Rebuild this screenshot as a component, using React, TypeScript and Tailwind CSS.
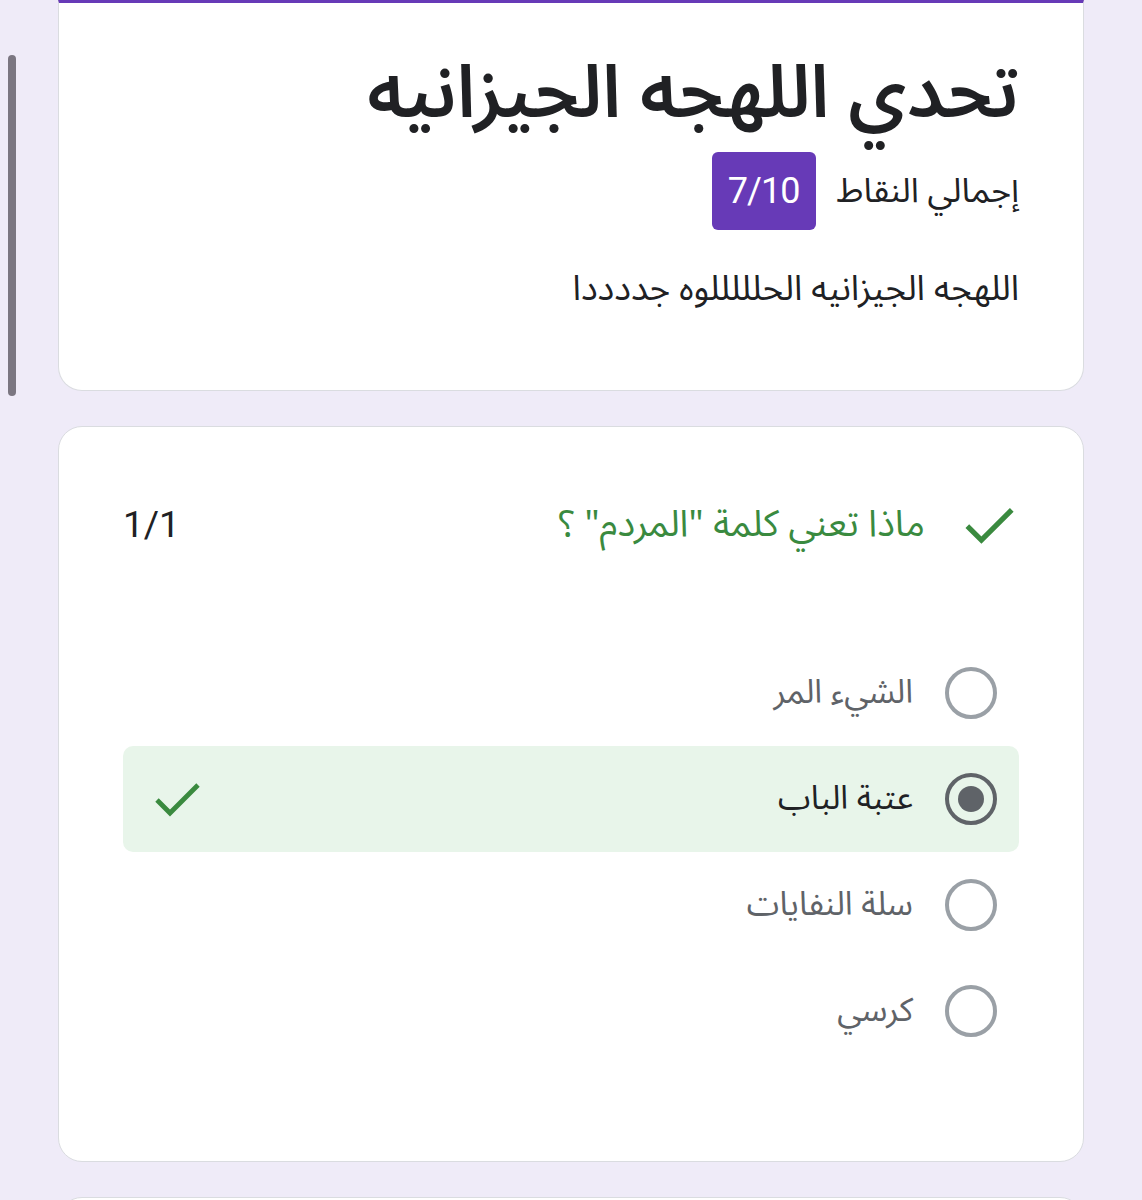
import React from "react";

const font = { fontFamily: '"Noto Sans Arabic", "DejaVu Sans", "Noto Sans", sans-serif' };
const latin = { fontFamily: '"Roboto", "Liberation Sans", sans-serif' };

function Check({ className }: { className?: string }) {
  return (
    <svg viewBox="0 0 24 24" className={className} fill="none">
      <path d="M2 12.5l6.5 6.5L22.5 5" stroke="currentColor" strokeWidth="2.4" />
    </svg>
  );
}

function Radio({ checked }: { checked?: boolean }) {
  return (
    <span
      className={
        "flex h-[52px] w-[52px] shrink-0 items-center justify-center rounded-full border-[4px] " +
        (checked ? "border-[#5f6368]" : "border-[#9aa0a6]")
      }
    >
      {checked ? <span className="h-[26px] w-[26px] rounded-full bg-[#5f6368]" /> : null}
    </span>
  );
}

const options = [
  { label: "الشيء المر", checked: false },
  { label: "عتبة الباب", checked: true },
  { label: "سلة النفايات", checked: false },
  { label: "كرسي", checked: false },
];

export default function App() {
  return (
    <div dir="rtl" style={font} className="relative h-[1200px] overflow-hidden bg-[#efebf8]">
      {/* scrollbar */}
      <div className="absolute left-[8px] top-[55px] h-[341px] w-[8px] rounded-full bg-[#7b7681]" />

      <div className="mx-auto flex w-[1026px] flex-col gap-[35px]">
        <div className="h-[391px] rounded-b-[24px] border-x border-b border-[#dadce0] border-t-[3px] border-t-[#673ab7] bg-white px-[64px] pt-[46px]">
          <h1 className="text-[73px] font-semibold leading-[90px] text-[#202124]">تحدي اللهجه الجيزانيه</h1>
          <div className="mt-[13px] flex items-center gap-[21px]">
            <span className="text-[34px] leading-[44px] text-[#202124]">إجمالي النقاط</span>
            <span
              dir="ltr"
              style={latin}
              className="flex h-[78px] w-[104px] items-center justify-center rounded-[6px] bg-[#673ab7] text-[36px] tracking-[-1px] text-white"
            >
              7/10
            </span>
          </div>
          <p className="mt-[34px] text-[35px] leading-[50px] text-[#202124]">اللهجه الجيزانيه  الحلللللوه جددددا</p>
        </div>

        <div className="h-[736px] rounded-[24px] border border-[#dadce0] bg-white pl-[64px] pr-[68px] pt-[70px]">
          <div className="flex items-center justify-between">
            <div className="flex items-center gap-[38px]">
              <Check className="h-[52px] w-[52px] text-[#3a8a3f]" />
              <span className="text-[37px] text-[#3a8a3f]">ماذا تعني كلمة "المردم" ؟</span>
            </div>
            <span dir="ltr" style={latin} className="text-[37px] text-[#202124]">
              1/1
            </span>
          </div>

          <div className="mt-[87px] -mr-[4px] flex flex-col">
            {options.map((o) => (
              <div
                key={o.label}
                className={
                  "flex h-[106px] items-center justify-between rounded-[10px] pr-[22px] pl-[30px] " +
                  (o.checked ? "bg-[#e8f5ea]" : "")
                }
              >
                <div className="flex items-center gap-[32px]">
                  <Radio checked={o.checked} />
                  <span className={"text-[33px] " + (o.checked ? "text-[#202124]" : "text-[#5f6368]")}>
                    {o.label}
                  </span>
                </div>
                {o.checked ? <Check className="h-[48px] w-[48px] text-[#3a8a3f]" /> : null}
              </div>
            ))}
          </div>
        </div>

        <div className="h-[200px] rounded-[24px] border border-[#dadce0] bg-white" />
      </div>
    </div>
  );
}
